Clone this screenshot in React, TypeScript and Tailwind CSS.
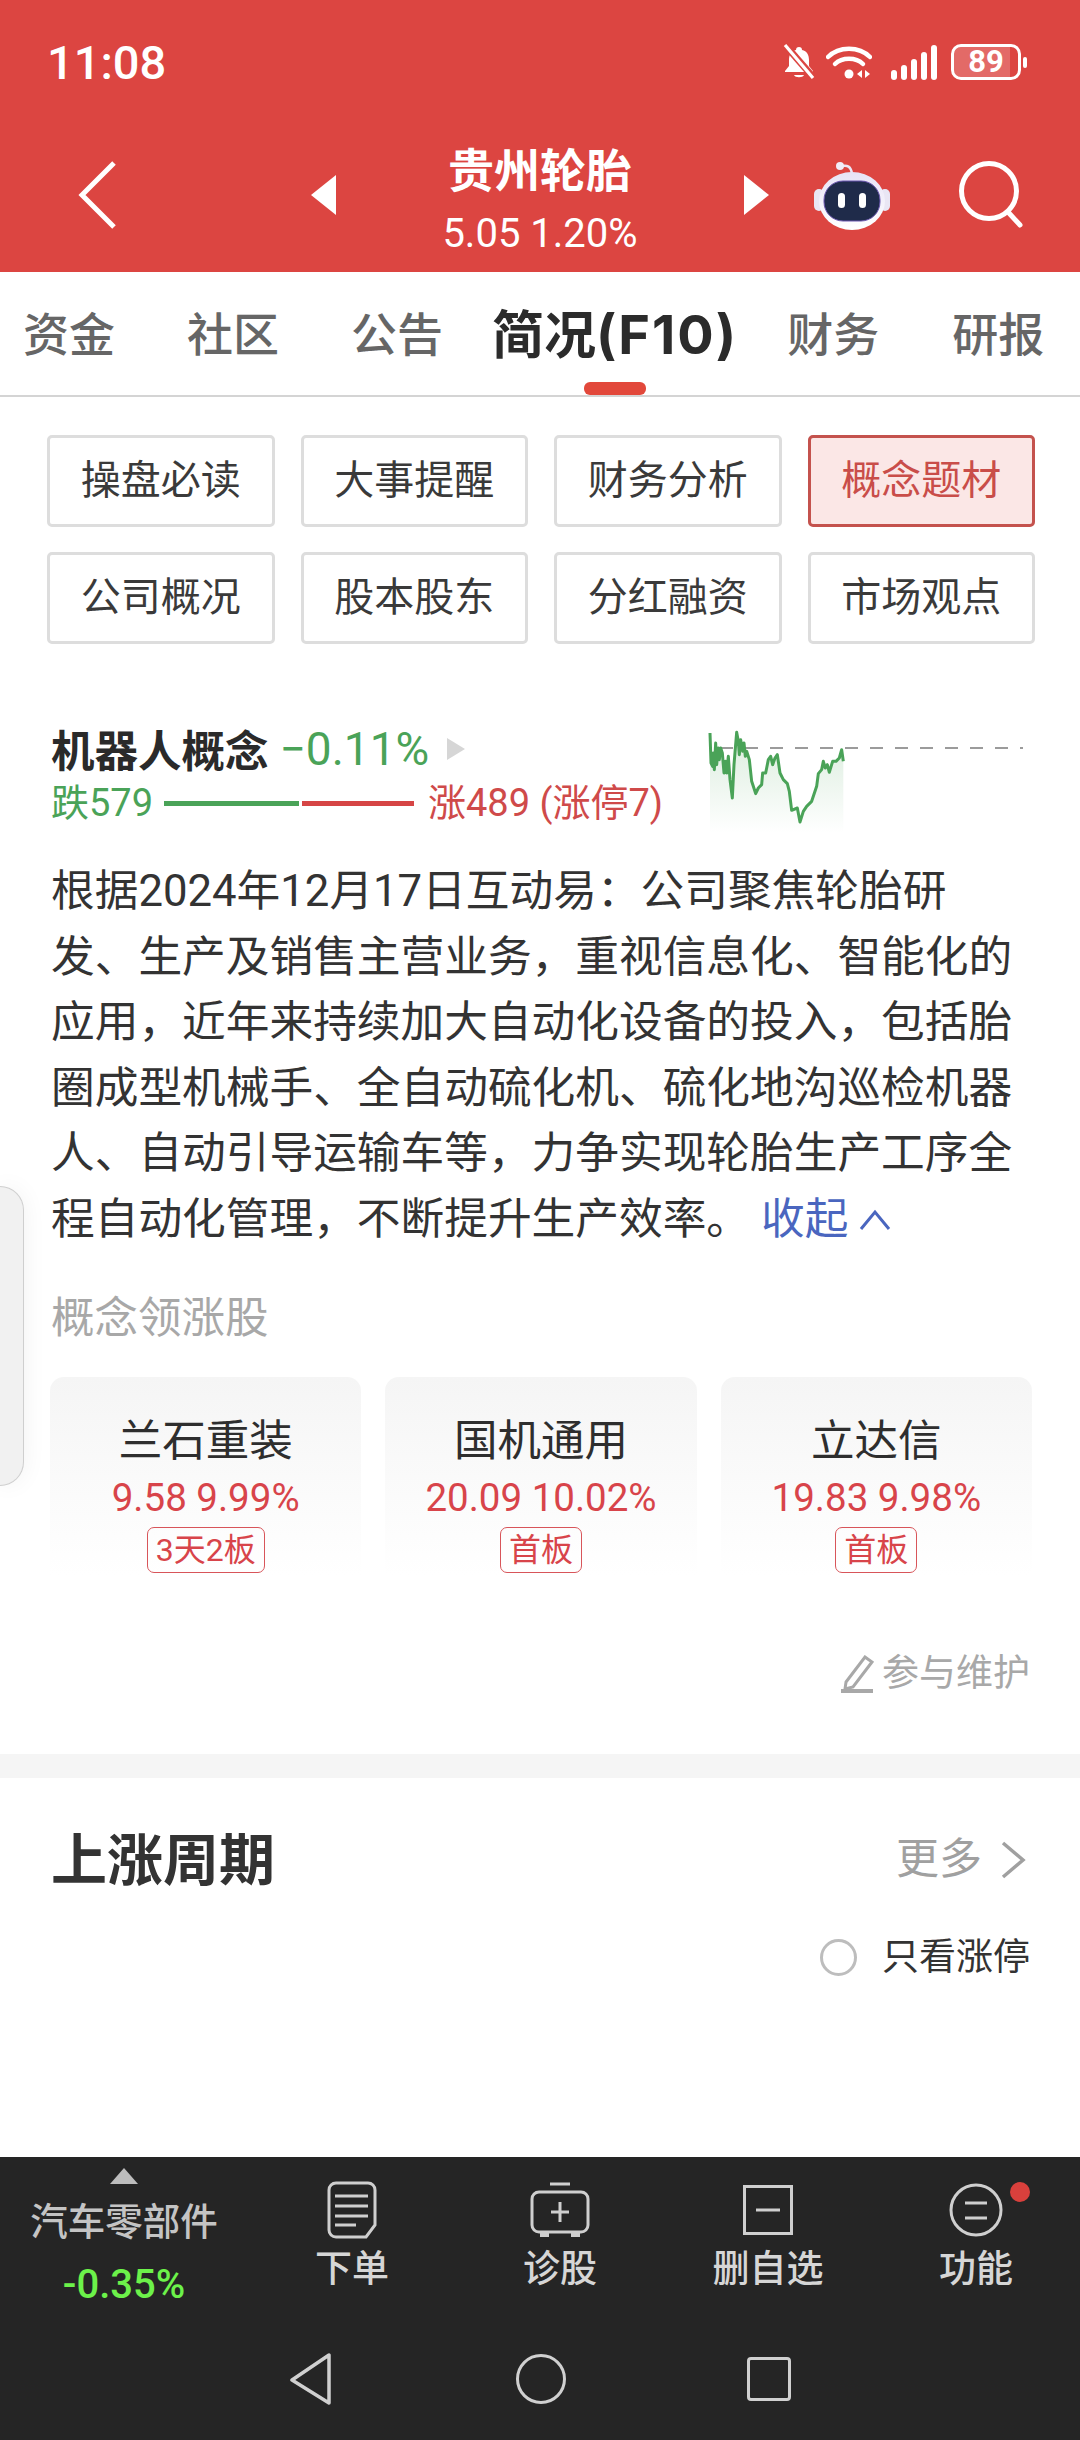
// ── Data ─────────────────────────────────────────────────────────

const menuItems = ['操盘必读', '大事提醒', '财务分析', '概念题材', '公司概况', '股本股东', '分红融资', '市场观点']

const leaders = [
  { name: '兰石重装', quote: '9.58 9.99%', tag: '3天2板' },
  { name: '国机通用', quote: '20.09 10.02%', tag: '首板' },
  { name: '立达信', quote: '19.83 9.98%', tag: '首板' },
]

const summary = [
  '根据2024年12月17日互动易：公司聚焦轮胎研',
  '发、生产及销售主营业务，重视信息化、智能化的',
  '应用，近年来持续加大自动化设备的投入，包括胎',
  '圈成型机械手、全自动硫化机、硫化地沟巡检机器',
  '人、自动引导运输车等，力争实现轮胎生产工序全',
]

const chartLine =
  '30,30 33,120 38,130 40,90 43,140 47,60 50,125 55,75 58,110 62,75 67,90 72,150 77,115 80,150 85,100 90,170 97,225 102,125 110,28 115,55 118,95 122,50 128,85 132,60 136,100 140,85 148,110 155,175 160,190 167,212 175,195 185,185 188,150 197,150 205,110 212,100 218,125 225,105 232,95 240,150 250,170 262,182 268,205 275,262 292,255 300,297 310,265 320,250 335,235 350,190 355,152 365,140 370,115 376,135 382,125 388,148 398,115 408,115 418,105 425,80 430,115'

// ── Status bar icons ─────────────────────────────────────────────

function StatusIcons() {
  return (
    <div className="flex items-center">
      <svg width="32" height="36" viewBox="0 0 32 36" className="mr-[11px]">
        <path d="M16 3c-2 0-3 1-3 3-5 1-7 5-7 10v6l-4 5v1h28v-1l-4-5v-6c0-5-2-9-7-10 0-2-1-3-3-3z" fill="#fff" />
        <path d="M11 31c1 3 9 3 10 0z" fill="#fff" />
        <path d="M3 2l27 31" stroke="#dc4541" strokeWidth="7" />
        <path d="M2 1l28 33" stroke="#fff" strokeWidth="3.2" />
      </svg>
      <svg width="46" height="34" viewBox="0 0 46 34" fill="none" stroke="#fff" strokeWidth="4.5" strokeLinecap="round" className="mr-[19px]">
        <path d="M2 12c11-11 31-11 42 0" />
        <path d="M9 19c7-7 21-7 28 0" />
        <circle cx="23" cy="29" r="4.5" fill="#fff" stroke="none" />
        <path d="M36 25l-5 4 5 4zM39 25l5 4-5 4z" fill="#fff" stroke="none" />
      </svg>
      <div className="flex items-end gap-[4px] h-[35px] mr-[14px]">
        {[10, 15, 21, 28, 35].map(h => (
          <div key={h} style={{ height: h }} className="w-[6px] rounded-full bg-white" />
        ))}
      </div>
      <div className="relative w-[70px] h-[36px] rounded-[10px] border-[3px] border-white flex items-center justify-center">
        <div className="absolute left-0 top-0 bottom-0 w-[87%] rounded-l-[7px] bg-white/20" />
        <span className="relative text-[31px] font-bold text-white leading-[30px]">89</span>
      </div>
      <div className="ml-[2px] w-[4px] h-[11px] rounded-full bg-white" />
    </div>
  )
}

function RobotIcon() {
  return (
    <svg width="80" height="72" viewBox="0 0 80 72">
      <defs>
        <linearGradient id="robotHead" x1="0" y1="0" x2="0" y2="1">
          <stop offset="0" stopColor="#e7e3f6" />
          <stop offset="1" stopColor="#ffffff" />
        </linearGradient>
      </defs>
      <path d="M30 7c5-1 9 0 10 8" fill="none" stroke="#ece6f5" strokeWidth="2.5" />
      <circle cx="28" cy="7" r="4" fill="#f1ecf8" />
      <rect x="2" y="30" width="10" height="22" rx="5" fill="#e9e6f4" />
      <rect x="68" y="30" width="10" height="22" rx="5" fill="#e9e6f4" />
      <ellipse cx="40" cy="42" rx="33" ry="29" fill="url(#robotHead)" />
      <rect x="12" y="22" width="56" height="40" rx="19" fill="#1f2b4a" stroke="#6b56b0" strokeWidth="1" />
      <rect x="26" y="34" width="7" height="15" rx="3.5" fill="#fff" />
      <rect x="47" y="34" width="7" height="15" rx="3.5" fill="#fff" />
    </svg>
  )
}

// ── Footer icons ─────────────────────────────────────────────────

const footerIcons = [
  <svg key="order" width="50" height="58" viewBox="0 0 50 58" fill="none" stroke="#cfcfcf" strokeWidth="3">
    <path d="M9 2h32a7 7 0 0 1 7 7v35l-9 12H9a7 7 0 0 1-7-7V9a7 7 0 0 1 7-7z" />
    <path d="M8 15h33M8 25h33M8 35h33M8 44h21" />
  </svg>,
  <svg key="diagnose" width="60" height="56" viewBox="0 0 60 56" fill="none" stroke="#cfcfcf" strokeWidth="3">
    <path d="M20 2h20" />
    <rect x="2" y="10" width="56" height="40" rx="7" />
    <path d="M30 20v20M21 30h18" />
    <path d="M10 50v5h9v-5M41 50v5h9v-5" fill="#cfcfcf" stroke="none" />
  </svg>,
  <svg key="remove" width="50" height="50" viewBox="0 0 50 50" fill="none" stroke="#cfcfcf" strokeWidth="3">
    <rect x="1.5" y="1.5" width="47" height="47" />
    <path d="M13 25h24" />
  </svg>,
  <svg key="more" width="54" height="54" viewBox="0 0 54 54" fill="none" stroke="#cfcfcf" strokeWidth="3">
    <circle cx="27" cy="27" r="25" />
    <path d="M16 20h22M16 35h22" />
  </svg>,
]

const footerLabels = ['下单', '诊股', '删自选', '功能']

// ── Component ────────────────────────────────────────────────────

export default function App() {
  return (
    <div className="relative w-[1080px] h-[2440px] overflow-hidden flex flex-col bg-white text-[#333] font-['Roboto','Noto_Sans_CJK_SC',sans-serif]">
      {/* Header */}
      <header className="h-[272px] shrink-0 bg-[#dc4541] text-white">
        <div className="h-[124px] flex items-center justify-between pl-[47px] pr-[53px]">
          <span className="text-[47px] font-medium leading-none">11:08</span>
          <StatusIcons />
        </div>
        <div className="h-[148px] flex items-start">
          <svg width="40" height="68" viewBox="0 0 40 68" fill="none" stroke="#fff" strokeWidth="5" className="ml-[78px] mt-[37px] shrink-0">
            <path d="M36 2L4 34l32 32" />
          </svg>
          <svg width="26" height="40" viewBox="0 0 26 40" className="ml-[193px] mt-[51px] shrink-0" fill="#fff"><path d="M25 0v40L0 20z" /></svg>
          <div className="w-[406px] flex flex-col items-center">
            <span className="text-[46px] font-bold leading-none mt-[20px] font-['Noto_Sans_CJK_SC',sans-serif]">贵州轮胎</span>
            <span className="text-[40px] leading-none mt-[24px]">5.05 1.20%</span>
          </div>
          <svg width="26" height="40" viewBox="0 0 26 40" className="mt-[51px] shrink-0" fill="#fff"><path d="M1 0v40l25-20z" /></svg>
          <div className="ml-[43px] mt-[35px] shrink-0"><RobotIcon /></div>
          <svg width="70" height="70" viewBox="0 0 70 70" fill="none" stroke="#fff" strokeWidth="5" className="ml-[64px] mt-[34px] shrink-0">
            <circle cx="33" cy="33" r="27.5" />
            <path d="M52 54l12 13" strokeLinecap="round" />
          </svg>
        </div>
      </header>

      {/* Tabs */}
      <nav className="relative h-[125px] shrink-0 border-b-2 border-[#d4d4d4] flex items-start pt-[36px] pl-[23px] text-[46px] leading-[54px] text-[#666] font-medium">
        <span>资金</span>
        <span className="ml-[72px]">社区</span>
        <span className="ml-[72px]">公告</span>
        <span className="ml-[49px] -mt-[2px] text-[52px] leading-[58px] font-bold text-[#2b2b2b] whitespace-nowrap">
          简况<span className="font-['Inter',sans-serif] text-[54px] tracking-[2px]">(F10)</span>
        </span>
        <span className="ml-[49px]">财务</span>
        <span className="ml-[73px]">研报</span>
        <div className="absolute left-[584px] bottom-0 w-[62px] h-[13px] rounded-t-[6px] rounded-b-[6px] bg-[#e2483b]" />
      </nav>

      <main className="flex-1 flex flex-col">
        {/* Shortcut grid */}
        <div className="mt-[38px] ml-[47px] w-[988px] grid grid-cols-4 gap-x-[26px] gap-y-[25px]">
          {menuItems.map(item => {
            const active = item === '概念题材'
            return (
              <div
                key={item}
                className={
                  active
                    ? 'h-[92px] rounded-[5px] border-[3px] border-[#c4524d] bg-[#fbe7e6] text-[#c94d49] flex items-center justify-center text-[40px]'
                    : 'h-[92px] rounded-[5px] border-[3px] border-[#dddddd] bg-white text-[#3a3a3a] flex items-center justify-center text-[40px]'
                }
              >
                {item}
              </div>
            )
          })}
        </div>

        {/* Concept summary */}
        <div className="mt-[75px] pl-[51px] relative">
          <div className="h-[60px] flex items-center">
            <span className="text-[43.5px] font-bold text-[#2a2a2a] font-['Noto_Sans_CJK_SC',sans-serif]">机器人概念</span>
            <span className="ml-[11px] text-[46px] text-[#4aa358] font-normal">−0.11%</span>
            <svg width="18" height="22" viewBox="0 0 18 22" className="ml-[18px]" fill="#d6d6d6"><path d="M0 0v22l18-11z" /></svg>
          </div>
          <div className="h-[49px] flex items-center text-[38px]">
            <span className="text-[#4aa358] w-[113px]">跌579</span>
            <div className="w-[135px] h-[5px] bg-[#4aa358]" />
            <div className="ml-[3px] w-[112px] h-[5px] bg-[#d64545]" />
            <span className="ml-[14px] text-[#cf4a4a] whitespace-nowrap">涨489 (涨停7)</span>
          </div>
          {/* Mini intraday chart */}
          <svg width="325" height="110" viewBox="0 0 325 110" className="absolute left-[700px] top-[4px]" fill="none">
            <defs>
              <linearGradient id="chartFill" x1="0" y1="0" x2="0" y2="1">
                <stop offset="0" stopColor="#4aa358" stopOpacity="0.2" />
                <stop offset="1" stopColor="#4aa358" stopOpacity="0" />
              </linearGradient>
            </defs>
            <path d="M10 25H323" stroke="#9b9b9b" strokeWidth="2" strokeDasharray="13 12" strokeDashoffset="-10" />
            <g transform="scale(0.3333)">
              <polygon points={`30,330 ${chartLine} 430,330`} fill="url(#chartFill)" />
              <polyline points={chartLine} stroke="#4aa358" strokeWidth="9" strokeLinejoin="round" />
            </g>
          </svg>
        </div>

        <div className="mt-[31px] ml-[51px] text-[43.7px] leading-[65.6px] text-[#333] whitespace-nowrap">
          {summary.map(line => (
            <div key={line}>{line}</div>
          ))}
          <div className="flex items-center">
            <span>程自动化管理，不断提升生产效率。</span>
            <span className="ml-[11px] text-[#4a66bf]">收起</span>
            <svg width="32" height="22" viewBox="0 0 32 22" fill="none" stroke="#4a66bf" strokeWidth="3" className="ml-[11px]">
              <path d="M2 20L16 3l14 17" />
            </svg>
          </div>
        </div>

        {/* Leaders */}
        <div className="mt-[36px] ml-[51px] h-[60px] flex items-center text-[43.5px] text-[#a8a8a8]">概念领涨股</div>
        <div className="mt-[28px] ml-[50px] w-[982px] grid grid-cols-3 gap-x-[24px]">
          {leaders.map(s => (
            <div key={s.name} className="h-[199px] rounded-t-[14px] bg-gradient-to-b from-[#f5f5f5] to-white flex flex-col items-center pt-[39px]">
              <span className="text-[43.5px] leading-[52px] text-[#2e2e2e]">{s.name}</span>
              <span className="text-[38.5px] leading-[44px] mt-[8px] text-[#d8444a]">{s.quote}</span>
              <span className="mt-[7px] h-[46px] px-[8px] rounded-[7px] border border-[#d8555a] text-[#d8444a] text-[32px] leading-[44px]">{s.tag}</span>
            </div>
          ))}
        </div>

        <div className="mt-[73px] pr-[50px] h-[50px] flex items-center justify-end text-[37px] text-[#a8a8a8]">
          <svg width="36" height="38" viewBox="0 0 36 38" fill="none" stroke="#a8a8a8" strokeWidth="3" className="mr-[6px]">
            <path d="M6 27L25 2l7 5-19 25-8 2z" />
            <path d="M1 36h32" strokeWidth="4" />
          </svg>
          参与维护
        </div>

        <div className="mt-[55px] h-[24px] bg-[#f5f5f5]" />

        {/* Rise cycle */}
        <div className="mt-[40px] h-[76px] pl-[51px] pr-[54px] flex items-center justify-between">
          <span className="text-[56px] font-bold text-[#333] font-['Noto_Sans_CJK_SC',sans-serif]">上涨周期</span>
          <div className="flex items-center text-[43px] text-[#a0a0a0] mt-[8px]">
            更多
            <svg width="26" height="38" viewBox="0 0 26 38" fill="none" stroke="#a0a0a0" strokeWidth="3.5" className="ml-[18px]">
              <path d="M3 2l20 17L3 36" />
            </svg>
          </div>
        </div>
        <div className="mt-[39px] h-[50px] pr-[50px] flex items-center justify-end text-[37px] text-[#333]">
          <div className="w-[37px] h-[37px] rounded-full border-[3px] border-[#bdbdbd] mr-[25px]" />
          只看涨停
        </div>
      </main>

      {/* Bottom bar */}
      <footer className="h-[283px] shrink-0 bg-[#252525] text-[#cfcfcf]">
        <div className="h-[163px] flex">
          <div className="w-[248px] shrink-0 flex flex-col items-center pt-[11px]">
            <svg width="28" height="16" viewBox="0 0 28 16" fill="#bdbdbd"><path d="M14 0l14 16H0z" /></svg>
            <span className="mt-[15px] text-[37.5px] leading-[46px] font-medium whitespace-nowrap text-[#c4c4c4]">汽车零部件</span>
            <span className="mt-[17px] text-[40px] leading-[46px] font-medium text-[#6cf24a]">-0.35%</span>
          </div>
          {footerLabels.map((label, i) => (
            <div key={label} className="relative w-[208px] flex flex-col items-center">
              <div className="h-[82px] flex items-center pt-[24px]">{footerIcons[i]}</div>
              <span className="mt-[9px] text-[37px] leading-[44px] font-medium text-[#d6d6d6]">{label}</span>
              {label === '功能' && <div className="absolute left-[138px] top-[25px] w-[20px] h-[20px] rounded-full bg-[#d9403c]" />}
            </div>
          ))}
        </div>
        <div className="flex items-center pl-[289px] mt-[33px]">
          <svg width="44" height="52" viewBox="0 0 44 52" fill="none" stroke="#d0d0d0" strokeWidth="3.5" strokeLinejoin="round"><path d="M40 2v48L3 27z" /></svg>
          <div className="ml-[183px] w-[50px] h-[50px] rounded-full border-[3.5px] border-[#d0d0d0]" />
          <div className="ml-[181px] w-[44px] h-[44px] rounded-[4px] border-[3.5px] border-[#d0d0d0]" />
        </div>
      </footer>

      {/* Floating side tab */}
      <div className="absolute left-0 top-[1186px] w-[24px] h-[300px] rounded-r-[40px] border border-l-0 border-[#cfcfcf] bg-[#f1f1f1] shadow-[0_0_24px_rgba(0,0,0,0.06)]" />
    </div>
  )
}
